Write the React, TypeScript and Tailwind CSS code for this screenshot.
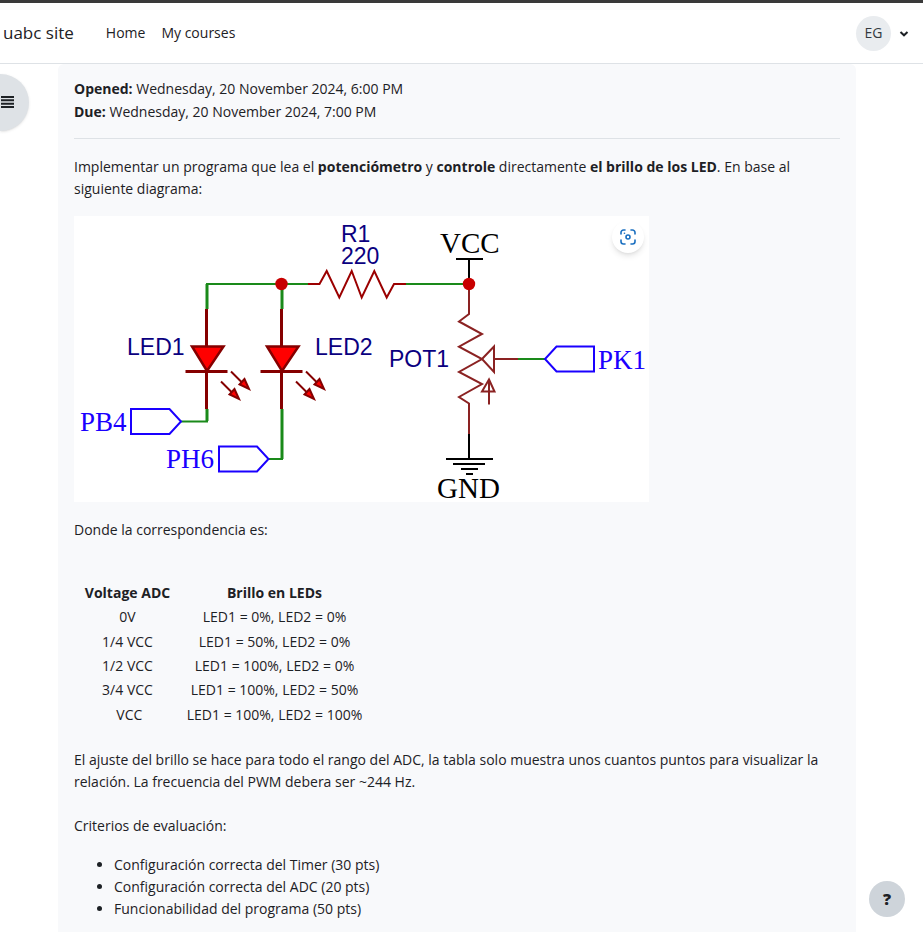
import React from "react";

const criteria = [
  "Configuración correcta del Timer (30 pts)",
  "Configuración correcta del ADC (20 pts)",
  "Funcionabilidad del programa (50 pts)",
];

const brightness = [
  ["0V", "LED1 = 0%, LED2 = 0%"],
  ["1/4 VCC", "LED1 = 50%, LED2 = 0%"],
  ["1/2 VCC", "LED1 = 100%, LED2 = 0%"],
  ["3/4 VCC", "LED1 = 100%, LED2 = 50%"],
  ["\u00a0VCC", "LED1 = 100%, LED2 = 100%"],
];

function Led({ x }: { x: number }) {
  return (
    <g transform={`translate(${x} 0)`} stroke="#850000" fill="none">
      <path d="M0 309V346M0 371V409" strokeWidth="3" />
      <path d="M-14.5 346.5H17L0.5 371Z" fill="#ff0000" strokeWidth="2.5" />
      <path d="M-21 371.5H21" strokeWidth="3" />
      <path d="M24.500 371.500L36 383M14.500 381.500L26 393" strokeWidth="2" />
      <path d="M38 379L33 384.500L42.500 389Z M28 389L23 394.500L32.500 399Z" fill="#ff0000" strokeWidth="2" />
    </g>
  );
}

function Schematic() {
  return (
    <svg
      viewBox="74 216 575 286"
      className="block w-full"
      role="img"
      aria-label="Diagrama: LED1, LED2, R1 y POT1"
      fill="none"
    >
      <g stroke="#1a8a1a">
        <path d="M207 309V284M282 284V309M207 409V421M282 409V459" strokeWidth="3" />
        <path d="M206 284H308M406 284H469M518 359H545M181 421.500H208M268 459H283" strokeWidth="2" />
      </g>
      <path
        d="M308 284H319.500L326.700 271L339.300 297.500L351.700 271L361.700 297.500L374.300 271L386.700 297.500L394 284H406"
        stroke="#9b0000"
        strokeWidth="2"
      />
      <Led x={206.5} />
      <Led x={281.5} />
      <g stroke="#8b2222" strokeWidth="2">
        <path d="M469 284V314L459 321.500L482 334L459 346.700L482 359L459 372L482 384L459 397L469 403.500V434" />
        <path d="M518 359H494M482 359L494 346.500V372Z" />
        <path d="M489 404.500V380M489 379.500L482 391.500H494.500Z" />
      </g>
      <g stroke="#000" strokeWidth="2">
        <path d="M469 259V284M456 259H483M469 434V459M446 459H493M453 464H485M461 469H478M466 474H473" />
      </g>
      <g stroke="#1a00ff" strokeWidth="2">
        <path d="M131 409H169.500L181 421.500L169.500 434H131Z" />
        <path d="M219 446.500H257L268.500 459L257 471.500H219Z" />
        <path d="M594 346.500H556.500L545 359L556.500 371.500H594Z" />
      </g>
      <circle cx="281.500" cy="284" r="6.200" fill="#c80000" />
      <circle cx="469" cy="284" r="6.200" fill="#c80000" />
      <g fill="#0a0080" fontFamily="'Liberation Sans', Arial, sans-serif" fontSize="23">
        <text x="341" y="242">R1</text>
        <text x="341" y="264">220</text>
        <text x="127" y="355">LED1</text>
        <text x="315" y="355">LED2</text>
        <text x="389" y="367">POT1</text>
      </g>
      <g fontFamily="'Liberation Serif', 'Times New Roman', serif">
        <g fill="#000" fontSize="29">
          <text x="440" y="253">VCC</text>
          <text x="437" y="498">GND</text>
        </g>
        <g fill="#1a00ff" fontSize="27">
          <text x="80" y="431">PB4</text>
          <text x="166" y="468">PH6</text>
          <text x="598" y="369">PK1</text>
        </g>
      </g>
    </svg>
  );
}

export default function App() {
  return (
    <div className="min-h-screen bg-white font-['Open_Sans','Noto_Sans',sans-serif] text-sm text-[#1d2125]">
      <header className="flex h-16 items-center border-t-3 border-b border-t-[#3a3a3a] border-b-[#dee2e6] pr-3.5 pl-[3px]">
        <a href="#" className="text-[17px]">uabc site</a>
        <nav className="ml-8 flex gap-4">
          <a href="#">Home</a>
          <a href="#">My courses</a>
        </nav>
        <button type="button" aria-label="User menu" className="ml-auto flex items-center gap-2">
          <span className="flex size-[35px] items-center justify-center rounded-full bg-[#e9ecef] text-[#343a40]">EG</span>
          <svg viewBox="0 0 10 10" className="size-[10px]" fill="none" stroke="#1d2125" strokeWidth="2">
            <path d="M1.500 4L5 7.300L8.500 4" />
          </svg>
        </button>
      </header>

      <button
        type="button"
        aria-label="Open course index"
        className="fixed top-[74px] left-0 flex h-[57px] w-[29px] items-center rounded-r-full bg-[#dee2e6] pb-0.5 shadow"
      >
        <svg viewBox="0 0 14 14" className="size-[14px]" stroke="#1d2125" strokeWidth="2">
          <path d="M1 2H14M1 5.300H14M1 8.700H14M1 12H14" />
        </svg>
      </button>

      <main className="mr-[67px] ml-[58px] rounded-t-md bg-[#f8f9fb] px-4 pt-[13px] pb-3">
        <div className="border-b border-[#dee2e6] pb-[15px] leading-[23px]">
          <div><strong>Opened:</strong> Wednesday, 20 November 2024, 6:00 PM</div>
          <div><strong>Due:</strong> Wednesday, 20 November 2024, 7:00 PM</div>
        </div>

        <p className="mt-[17px] leading-[22px]">
          Implementar un programa que lea el <strong>potenciómetro</strong> y <strong>controle</strong> directamente{" "}
          <strong>el brillo de los LED</strong>. En base al siguiente diagrama:
        </p>

        <div className="relative mt-4 max-w-[575px] bg-white">
          <Schematic />
          <button
            type="button"
            aria-label="Visual search"
            className="absolute top-[5px] right-[5px] flex size-8 items-center justify-center rounded-full bg-white shadow-md"
          >
            <svg viewBox="0 0 16 16" className="size-4" fill="none" stroke="#1a6fc0" strokeWidth="1.600" strokeLinecap="round">
              <path d="M1 5V3.500A2.500 2.500 0 0 1 3.500 1H5M11 1H12.500A2.500 2.500 0 0 1 15 3.500V5M15 11V12.500A2.500 2.500 0 0 1 12.500 15H11M5 15H3.500A2.500 2.500 0 0 1 1 12.500V11" />
              <circle cx="8" cy="8" r="2" />
              <path d="M4.400 4.300H4.500" />
            </svg>
          </button>
        </div>

        <p className="mt-[17px] leading-[22px]">Donde la correspondencia es:</p>

        <table className="mt-10 h-[146px] text-center leading-6">
          <thead>
            <tr>
              <th scope="col" className="w-[107px]">Voltage ADC</th>
              <th scope="col" className="w-[187px]">Brillo en LEDs</th>
            </tr>
          </thead>
          <tbody>
            {brightness.map(([voltage, leds]) => (
              <tr key={voltage}>
                <td>{voltage}</td>
                <td>{leds}</td>
              </tr>
            ))}
          </tbody>
        </table>

        <p className="mt-[22px] leading-[22px]">
          El ajuste del brillo se hace para todo el rango del ADC, la tabla solo muestra unos cuantos puntos para
          visualizar la relación. La frecuencia del PWM debera ser ~244 Hz.
        </p>
        <p className="mt-[22px] leading-[22px]">Criterios de evaluación:</p>
        <ul className="mt-[17px] list-disc pl-10 leading-[22px]">
          {criteria.map((item) => (
            <li key={item}>{item}</li>
          ))}
        </ul>
      </main>

      <button
        type="button"
        aria-label="Help"
        className="fixed right-[18px] bottom-[15px] flex size-9 items-center justify-center rounded-full bg-[#ced4da] text-base font-extrabold"
      >
        ?
      </button>
    </div>
  );
}
